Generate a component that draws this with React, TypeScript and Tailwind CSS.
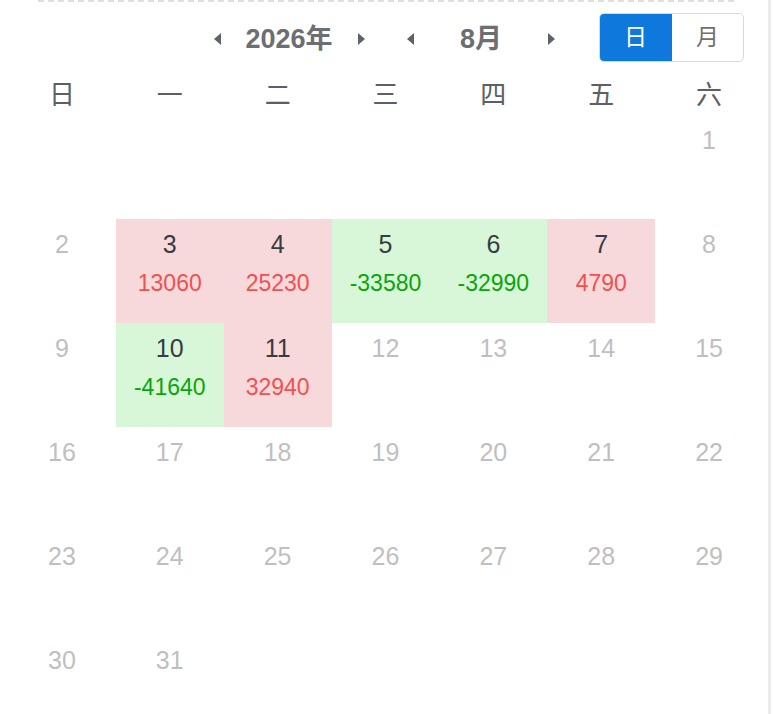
import React from "react";

type Cell = { d: number | null; v?: number };

const data: Record<number, number> = {
  3: 13060,
  4: 25230,
  5: -33580,
  6: -32990,
  7: 4790,
  10: -41640,
  11: 32940,
};

function buildCells(): Cell[] {
  const cells: Cell[] = [];
  for (let i = 0; i < 6; i++) cells.push({ d: null });
  for (let d = 1; d <= 31; d++) cells.push({ d, v: data[d] });
  while (cells.length < 42) cells.push({ d: null });
  return cells;
}

const Caret = ({ dir }: { dir: "l" | "r" }) => (
  <svg width="9" height="16" viewBox="0 0 9 16">
    {dir === "l" ? (
      <polygon points="8,2 1,8 8,14" fill="#5d636a" />
    ) : (
      <polygon points="1,2 8,8 1,14" fill="#5d636a" />
    )}
  </svg>
);

export default function App() {
  const cells = buildCells();
  const weekdays = ["日", "一", "二", "三", "四", "五", "六"];
  const font = { fontFamily: '"Liberation Sans", Arial, "Noto Sans CJK SC", sans-serif' };
  return (
    <div className="w-[774px] h-[714px] overflow-hidden bg-white flex" style={font}>
      <div className="w-[768px] flex flex-col">
        <div className="shrink-0 ml-[38px] w-[696px] border-t-2 border-dashed border-[#dedede]" />
        <div className="shrink-0 flex items-center h-[49px] mt-[11px]">
          <div className="w-[205px]" />
          <div className="w-[24px] flex justify-center pt-[2px]">
            <Caret dir="l" />
          </div>
          <div className="w-[120px] text-center text-[27px] font-bold text-[#6b6e72] leading-none pt-[3px]">2026年</div>
          <div className="w-[24px] flex justify-center pt-[2px]">
            <Caret dir="r" />
          </div>
          <div className="w-[25px]" />
          <div className="w-[24px] flex justify-center pt-[2px]">
            <Caret dir="l" />
          </div>
          <div className="w-[118px] text-center text-[27px] font-bold text-[#6b6e72] leading-none pt-[3px]">8月</div>
          <div className="w-[22px] flex justify-center pt-[2px]">
            <Caret dir="r" />
          </div>
          <div className="ml-[37px] flex h-[49px] w-[145px] rounded-[5px] border border-[#d9d9d9] overflow-hidden">
            <div className="w-[73px] -m-px mr-0 bg-[#0e78dc] flex items-center justify-center text-white text-[23px] rounded-l-[5px]">日</div>
            <div className="flex-1 flex items-center justify-center text-[#707070] text-[23px]">月</div>
          </div>
        </div>
        <div className="shrink-0 ml-[8px] w-[755px] grid grid-cols-7 h-[53px] pt-[20px]">
          {weekdays.map((w) => (
            <div key={w} className="text-center text-[26px] text-[#5b6066] leading-[26px] h-[26px]">
              {w}
            </div>
          ))}
        </div>
        <div className="shrink-0 ml-[8px] w-[755px] grid grid-cols-7 auto-rows-[104px]">
          {cells.map((c, i) => {
            const has = c.v !== undefined;
            const pos = has && (c.v as number) > 0;
            const bg = !has ? "" : pos ? "bg-[#f7d9db]" : "bg-[#d8f7d8]";
            return (
              <div key={i} className={`flex flex-col items-center pt-[12px] ${bg}`}>
                {c.d !== null && (
                  <div className={`text-[25px] leading-[26px] ${has ? "text-[#363c43]" : "text-[#bfbfbf]"}`}>
                    {c.d}
                  </div>
                )}
                {has && (
                  <div
                    className={`mt-[14px] text-[23px] leading-[24px] ${pos ? "text-[#f25050]" : "text-[#0aa50a]"}`}
                  >
                    {c.v}
                  </div>
                )}
              </div>
            );
          })}
        </div>
      </div>
      <div className="w-[3px] h-full bg-[#ececec]" />
    </div>
  );
}
